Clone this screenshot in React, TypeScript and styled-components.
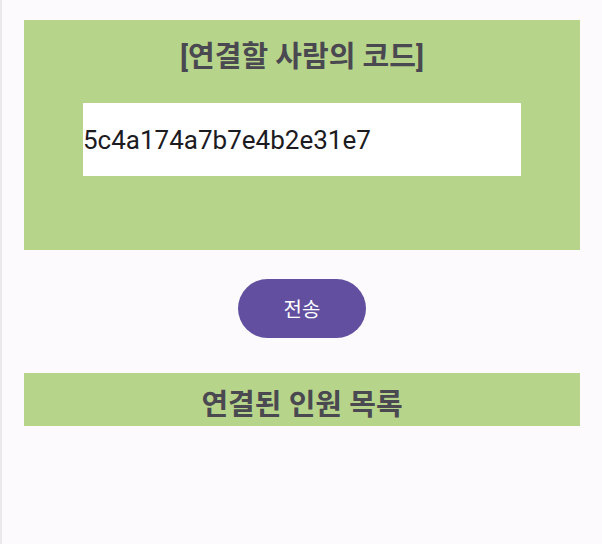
import React from "react";
import styled, { createGlobalStyle } from "styled-components";

const Global = createGlobalStyle`
  html, body { margin: 0; padding: 0; background: #fcfafd; }
  body { font-family: Roboto, "Noto Sans CJK KR", sans-serif; }
`;

const Screen = styled.div`
  box-sizing: border-box;
  min-height: 544px;
  border-left: 2px solid #eae8eb;
  padding: 20px 22px 0 22px;
  display: flex;
  flex-direction: column;
  align-items: stretch;
`;

const Panel = styled.section<{ $height: number }>`
  background: #b7d48b;
  height: ${(p) => p.$height}px;
  display: flex;
  flex-direction: column;
  align-items: center;
  box-sizing: border-box;
  overflow: hidden;
`;

const Title = styled.h2<{ $top: number }>`
  margin: ${(p) => p.$top}px 0 0 0;
  font-family: Roboto, "Noto Sans CJK KR", sans-serif;
  font-size: 29px;
  line-height: 34px;
  font-weight: 700;
  color: #4a4850;
  text-align: center;
  white-space: nowrap;
`;

const CodeField = styled.div`
  margin-top: 29px;
  width: 438px;
  height: 73px;
  background: #ffffff;
  display: flex;
  align-items: center;
  font-family: Roboto, sans-serif;
  font-size: 26px;
  color: #1c1b1f;
`;

const ButtonRow = styled.div`
  display: flex;
  justify-content: center;
  margin: 29px 0 35px;
`;

const SendButton = styled.button`
  width: 128px;
  height: 59px;
  border: none;
  border-radius: 30px;
  background: #624f9f;
  color: #ffffff;
  font-family: Roboto, "Noto Sans CJK KR", sans-serif;
  font-size: 20px;
  padding: 0;
`;

export default function App() {
  return (
    <>
      <Global />
      <Screen>
        <Panel $height={230}>
          <Title $top={20}>[연결할 사람의 코드]</Title>
          <CodeField>5c4a174a7b7e4b2e31e7</CodeField>
        </Panel>
        <ButtonRow>
          <SendButton>전송</SendButton>
        </ButtonRow>
        <Panel $height={53}>
          <Title $top={15}>연결된 인원 목록</Title>
        </Panel>
      </Screen>
    </>
  );
}
